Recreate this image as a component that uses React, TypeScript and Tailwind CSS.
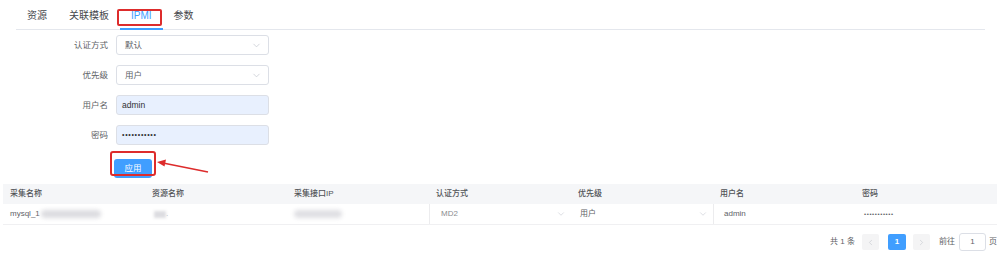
import React from 'react';
import { ChevronDown, ChevronLeft, ChevronRight } from 'lucide-react';

const tabs = ['资源', '关联模板', 'IPMI', '参数'];

function SelectBox({ value }: { value: string }) {
  return (
    <div className="ml-[8px] w-[153px] h-[20px] border border-[#dcdfe6] rounded-[3px] bg-white flex items-center justify-between pl-[8px] pr-[6px]">
      <span className="text-[8.5px] text-[#606266]">{value}</span>
      <ChevronDown size={11} strokeWidth={1.5} className="text-[#c0c4cc]" />
    </div>
  );
}

function FilledInput({ value, small }: { value: string; small?: boolean }) {
  return (
    <div className="ml-[8px] w-[153px] h-[20px] border border-[#dcdfe6] rounded-[3px] bg-[#e8f0fe] flex items-center pl-[5px]">
      <span className={small ? 'text-[7px] tracking-[0.7px] text-[#303133]' : 'text-[8.5px] text-[#303133]'}>{value}</span>
    </div>
  );
}

function FormRow({ label, children }: { label: string; children: React.ReactNode }) {
  return (
    <div className="flex items-center h-[20px]">
      <div className="w-[108px] text-right text-[8.5px] text-[#606266]">{label}</div>
      {children}
    </div>
  );
}

const headers = ['采集名称', '资源名称', '采集接口IP', '认证方式', '优先级', '用户名', '密码'];

export default function App() {
  return (
    <div className="w-[1000px] h-[270px] bg-white overflow-hidden font-['Liberation_Sans','Noto_Sans_CJK_SC',sans-serif] text-[#606266]">
      {/* tabs */}
      <div className="pl-[16px] pr-[15px]">
        <div className="flex h-[30px] border-b border-[#e4e7ed]">
          {tabs.map(t => {
            const active = t === 'IPMI';
            return (
              <div key={t} className="relative px-[11px] h-full flex items-center pt-[2px]">
                <span className={active ? 'text-[10px] text-[#409eff]' : 'text-[10px] text-[#45474b]'}>{t}</span>
                {active && (
                  <>
                    <div className="absolute left-0 right-0 bottom-[-1px] h-[2px] bg-[#409eff]" />
                    <div className="absolute left-[-3px] top-[9px] w-[45px] h-[17px] border-2 border-[#dd2c2c] rounded-[2px]" />
                  </>
                )}
              </div>
            );
          })}
        </div>
      </div>

      {/* form */}
      <div className="mt-[5px] flex flex-col gap-[10px]">
        <FormRow label="认证方式"><SelectBox value="默认" /></FormRow>
        <FormRow label="优先级"><SelectBox value="用户" /></FormRow>
        <FormRow label="用户名"><FilledInput value="admin" /></FormRow>
        <FormRow label="密码"><FilledInput value="•••••••••••" small /></FormRow>
      </div>
      <div className="relative mt-[9px] ml-[114px] h-[19px] w-[38px]">
        <button className="w-[38px] h-[19px] bg-[#409eff] rounded-[3px] text-white text-[8.5px]">应用</button>
        <div className="absolute left-[-4px] top-[-3px] w-[46px] h-[25px] border-2 border-[#dd2c2c] rounded-[3px]" />
        <svg className="absolute left-[42px] top-[4px]" width="54" height="16" viewBox="0 0 54 16">
          <line x1="52" y1="14" x2="7" y2="5" stroke="#dd2c2c" strokeWidth="1.6" />
          <polygon points="1,4 10,1.5 8.5,8.5" fill="#dd2c2c" />
        </svg>
      </div>

      {/* table */}
      <div className="mt-[11px] mx-[3px]">
        <div className="grid grid-cols-7 h-[20px] bg-[#f5f6f8] items-center">
          {headers.map(h => (
            <div key={h} className="px-[7px] text-[8px] text-[#505256] font-medium">{h}</div>
          ))}
        </div>
        <div className="grid grid-cols-7 h-[21px] items-center border-b border-[#f0f0f2] text-[8px] text-[#606266]">
          <div className="px-[7px] flex items-center">
            <span>mysql_1</span>
            <span className="ml-[1px] w-[60px] h-[8px] bg-[#dcdce0] blur-[2px] rounded-sm" />
          </div>
          <div className="px-[9px] flex items-center">
            <span className="w-[12px] h-[7px] bg-[#dcdce0] blur-[1.5px]" />
            <span className="text-[#b0b0b4]">.</span>
          </div>
          <div className="px-[7px] flex items-center">
            <span className="w-[48px] h-[8px] bg-[#dfdfe3] blur-[2px] rounded-sm" />
          </div>
          <div className="h-full flex items-center">
            <div className="h-full w-full border-l border-[#ececee] flex items-center justify-between pl-[11px] pr-[5px]">
              <span className="text-[#8a8c90]">MD2</span>
              <ChevronDown size={10} strokeWidth={1.3} className="text-[#c0c4cc]" />
            </div>
          </div>
          <div className="h-full flex items-center justify-between pl-[9px] pr-[5px]">
            <span>用户</span>
            <ChevronDown size={10} strokeWidth={1.3} className="text-[#c0c4cc]" />
          </div>
          <div className="h-full border-l border-[#ececee] flex items-center pl-[10px]">
            <span>admin</span>
          </div>
          <div className="px-[9px] flex items-center">
            <span className="text-[6px] tracking-[0.6px] text-[#606266]">•••••••••••</span>
          </div>
        </div>
      </div>

      {/* pagination */}
      <div className="mt-[9px] pr-[3px] flex justify-end items-center h-[16px] text-[8px] text-[#606266]">
        <span>共 1 条</span>
        <div className="ml-[7px] w-[17px] h-[16px] bg-[#f4f4f5] rounded-[2px] flex items-center justify-center">
          <ChevronLeft size={9} strokeWidth={1.5} className="text-[#c0c4cc]" />
        </div>
        <div className="ml-[9px] w-[18px] h-[16px] bg-[#409eff] rounded-[2px] flex items-center justify-center text-white font-bold">1</div>
        <div className="ml-[7px] w-[17px] h-[16px] bg-[#f4f4f5] rounded-[2px] flex items-center justify-center">
          <ChevronRight size={9} strokeWidth={1.5} className="text-[#c0c4cc]" />
        </div>
        <span className="ml-[9px]">前往</span>
        <div className="ml-[4px] w-[27px] h-[18px] border border-[#dcdfe6] rounded-[3px] flex items-center justify-center">1</div>
        <span className="ml-[3px]">页</span>
      </div>
    </div>
  );
}
